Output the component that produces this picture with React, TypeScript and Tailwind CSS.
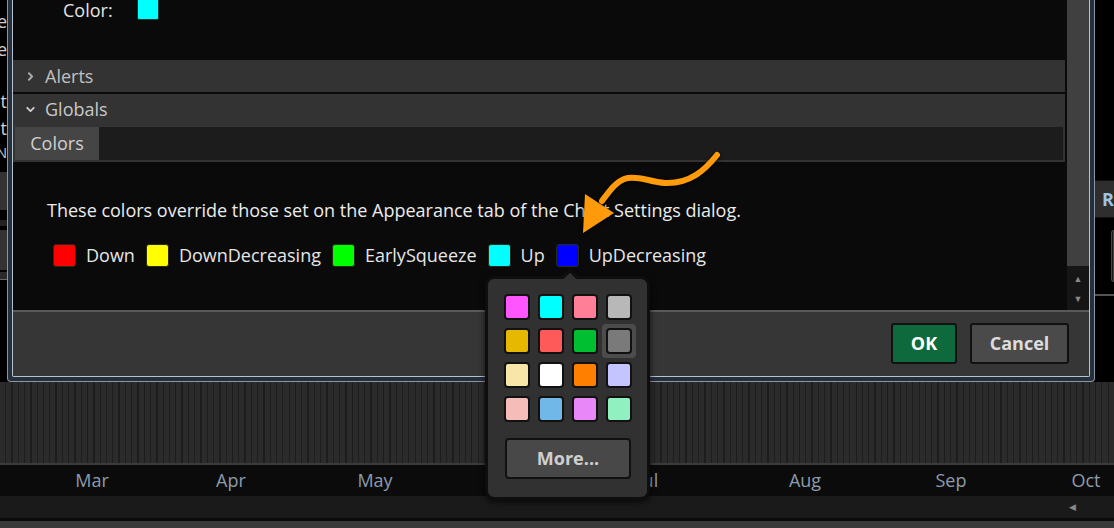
import React from 'react';
import { ChevronRight, ChevronDown } from 'lucide-react';

const legend = [
  { name: 'Down', color: 'bg-[#ff0000]' },
  { name: 'DownDecreasing', color: 'bg-[#ffff00]' },
  { name: 'EarlySqueeze', color: 'bg-[#00ff00]' },
  { name: 'Up', color: 'bg-[#00ffff]' },
  { name: 'UpDecreasing', color: 'bg-[#0000ff]' },
];

const palette = [
  'bg-[#ff55ff]', 'bg-[#00ffff]', 'bg-[#ff7f99]', 'bg-[#b8b8b8]',
  'bg-[#e6b800]', 'bg-[#ff5a5a]', 'bg-[#00c032]', 'bg-[#7a7a7a]',
  'bg-[#f8e6a8]', 'bg-[#ffffff]', 'bg-[#ff8000]', 'bg-[#c4c4ff]',
  'bg-[#f5bcb8]', 'bg-[#70b8e8]', 'bg-[#e888f8]', 'bg-[#90f0c0]',
];

const months = [
  { label: 'Mar', x: 92 },
  { label: 'Apr', x: 231 },
  { label: 'May', x: 375 },
  { label: 'Jun', x: 512 },
  { label: 'Jul', x: 648 },
  { label: 'Aug', x: 805 },
  { label: 'Sep', x: 951 },
  { label: 'Oct', x: 1086 },
];

function LeftStrip() {
  // bits of the window behind the dialog
  return (
    <div className="w-[7px] shrink-0 overflow-hidden flex flex-col items-end text-[18px] text-[#cfcfcf] leading-none">
      <div className="flex justify-end w-full whitespace-nowrap mt-[12px]">Scale</div>
      <div className="flex justify-end w-full whitespace-nowrap mt-[10px]">Style</div>
      <div className="flex justify-end w-full whitespace-nowrap mt-[34px]">Plot</div>
      <div className="flex justify-end w-full whitespace-nowrap mt-[9px]">Plot</div>
      <div className="flex justify-end w-full whitespace-nowrap mt-[9px] text-[14px]">N</div>
      <div className="w-full h-[38px] bg-[#333] mt-[12px]" />
      <div className="w-full h-[6px] bg-[#222] mt-[10px]" />
      <div className="w-full h-[40px] bg-[#333] mt-[4px]" />
      <div className="w-full h-[8px] bg-[#2a2a2a] mt-[2px] border-b border-[#666]" />
    </div>
  );
}

function RightStrip() {
  return (
    <div className="flex-1 bg-black flex flex-col">
      <div className="h-[180px]" />
      <div className="h-[38px] bg-[#2e2e2e] border-y border-[#111] pl-[7px] flex items-center text-[18px] font-bold text-[#9cc3e8]">R</div>
      <div className="h-[12px]" />
      <div className="h-[52px] bg-[#1a1a1a] border border-[#444] rounded-l-[3px] ml-[16px]" />
      <div className="h-[14px] border-b-2 border-[#555]" />
    </div>
  );
}

function Dialog() {
  return (
    <div className="w-[1088px] shrink-0 flex flex-col border-x border-b border-[#8a96a4] rounded-b-[4px] bg-[#26303c] px-[4px] pb-[4px]">
      <div className="flex-1 flex flex-col border-x border-b border-[#b8c2cc] rounded-b-[2px] overflow-hidden">
        <div className="h-[310px] flex bg-[#0a0a0a]">
          <div className="flex-1 flex flex-col">
            <div className="h-[60px] flex items-start pl-[50px] gap-[24px] text-[18px] text-[#e4e4e4] leading-none">
              <span className="pt-[1px]">Color:</span>
              <span className="-mt-[4px] w-[22px] h-[24px] bg-[#00ffff] rounded-[2px] border border-[#0a3a3a]" />
            </div>
            <div className="h-[32px] mr-[2px] bg-[#333] flex items-center pl-[11px] gap-[8px] text-[18px] text-[#c0c0c0]">
              <ChevronRight size={13} strokeWidth={3.5} className="text-[#aaa]" />
              <span>Alerts</span>
            </div>
            <div className="mt-[2px] mr-[2px] bg-[#333] flex flex-col">
              <div className="h-[30px] flex items-center pl-[11px] gap-[8px] text-[18px] text-[#c8c8c8]">
                <ChevronDown size={13} strokeWidth={3.5} className="text-[#ccc]" />
                <span>Globals</span>
              </div>
              <div className="mx-[2px] mb-[2px] mt-[3px] h-[33px] flex bg-[#1c1c1c]">
                <div className="w-[84px] bg-[#454545] flex items-center justify-center text-[18px] text-[#d0d0d0]">Colors</div>
              </div>
            </div>
            <div className="pl-[34px] pt-[39px] text-[18px] text-[#ececec] leading-none">
              These colors override those set on the Appearance tab of the Chart Settings dialog.
            </div>
            <div className="pl-[40px] pt-[23px] flex items-center text-[18px] text-[#e6e6e6]">
              {legend.map((l) => (
                <div key={l.name} className="flex items-center mr-[11px]">
                  <span className={`w-[23px] h-[23px] rounded-[3px] border border-[#2a2a18] ${l.color}`} />
                  <span className="ml-[10px]">{l.name}</span>
                </div>
              ))}
            </div>
          </div>
          <div className="w-[22px] flex flex-col">
            <div className="h-[266px] bg-[#404040]" />
            <div className="flex-1 bg-[#151515] flex flex-col items-center justify-around py-[2px] text-[9px] text-[#888] leading-none">
              <span>▲</span>
              <span>▼</span>
            </div>
          </div>
        </div>
        <div className="flex-1 bg-[#363636] border-t-2 border-[#5a5a5a] flex items-start justify-end pt-[11px] pr-[20px] gap-[13px]">
          <button className="w-[66px] h-[41px] rounded-[3px] border-2 border-[#111] bg-[#0e6a3c] text-[18px] font-bold text-white">OK</button>
          <button className="w-[99px] h-[41px] rounded-[3px] border-2 border-[#111] bg-[#4a4a4a] text-[18px] font-bold text-[#dcdcdc]">Cancel</button>
        </div>
      </div>
    </div>
  );
}

function Popover() {
  return (
    <div className="absolute left-[485px] top-[276px] w-[165px] h-[224px] rounded-[9px] border-[3px] border-[#0e0e0e] bg-[#313131] shadow-[0_2px_6px_rgba(0,0,0,0.7)]">
      <div className="absolute left-[76px] -top-[8px] w-[12px] h-[12px] rotate-45 bg-[#313131] border-l-[3px] border-t-[3px] border-[#0e0e0e]" />
      <div className="relative pl-[16px] pt-[15px] grid grid-cols-[repeat(4,26px)] gap-[8px]">
        {palette.map((c, i) => (
          <div key={i} className={i === 7 ? 'relative' : ''}>
            {i === 7 && <div className="absolute -inset-[4px] rounded-[4px] bg-[#4c4c4c]" />}
            <div className={`relative w-[26px] h-[26px] rounded-[4px] border-2 border-[#111] ${c}`} />
          </div>
        ))}
      </div>
      <button className="ml-[17px] mt-[16px] w-[126px] h-[41px] rounded-[4px] border-2 border-[#111] bg-[#484848] text-[18px] font-bold text-[#cfcfcf]">More...</button>
    </div>
  );
}

function Arrow() {
  return (
    <svg className="absolute left-0 top-0 pointer-events-none drop-shadow-[0_1px_2px_rgba(0,0,0,0.8)]" width="1114" height="528">
      <path d="M717,155 C705,170 690,184 665,183 C650,182 640,176 628,178 C617,180 610,190 602,201" fill="none" stroke="#ff9a0a" strokeWidth="6" strokeLinecap="round" />
      <polygon points="583,233 585,194 614,213" fill="#ff9a0a" />
    </svg>
  );
}

export default function App() {
  return (
    <div className="relative w-[1114px] h-[528px] overflow-hidden bg-black font-['Open_Sans',sans-serif]">
      <div className="flex h-[382px] bg-black">
        <LeftStrip />
        <Dialog />
        <RightStrip />
      </div>
      <div className="h-[81px] bg-[repeating-linear-gradient(90deg,#2b2b2b_0px,#2b2b2b_5px,#1d1d1d_5px,#1d1d1d_6.3px)]" />
      <div className="relative h-[33px] bg-[#0b0b0b] border-t-2 border-[#3c3c3c]">
        {months.map((m) => (
          <span
            key={m.label}
            className="absolute top-[2px] -translate-x-1/2 text-[18px] text-[#8c9cad]"
            style={{ left: m.x }}
          >
            {m.label}
          </span>
        ))}
      </div>
      <div className="h-[22px] bg-[#1a1a1a] flex items-center justify-end pr-[38px] text-[9px] text-[#888]">◀</div>
      <div className="h-[3px] bg-[#0b0b0b]" />
      <div className="h-[7px] bg-[#3a3a3a]" />
      <Popover />
      <Arrow />
    </div>
  );
}
